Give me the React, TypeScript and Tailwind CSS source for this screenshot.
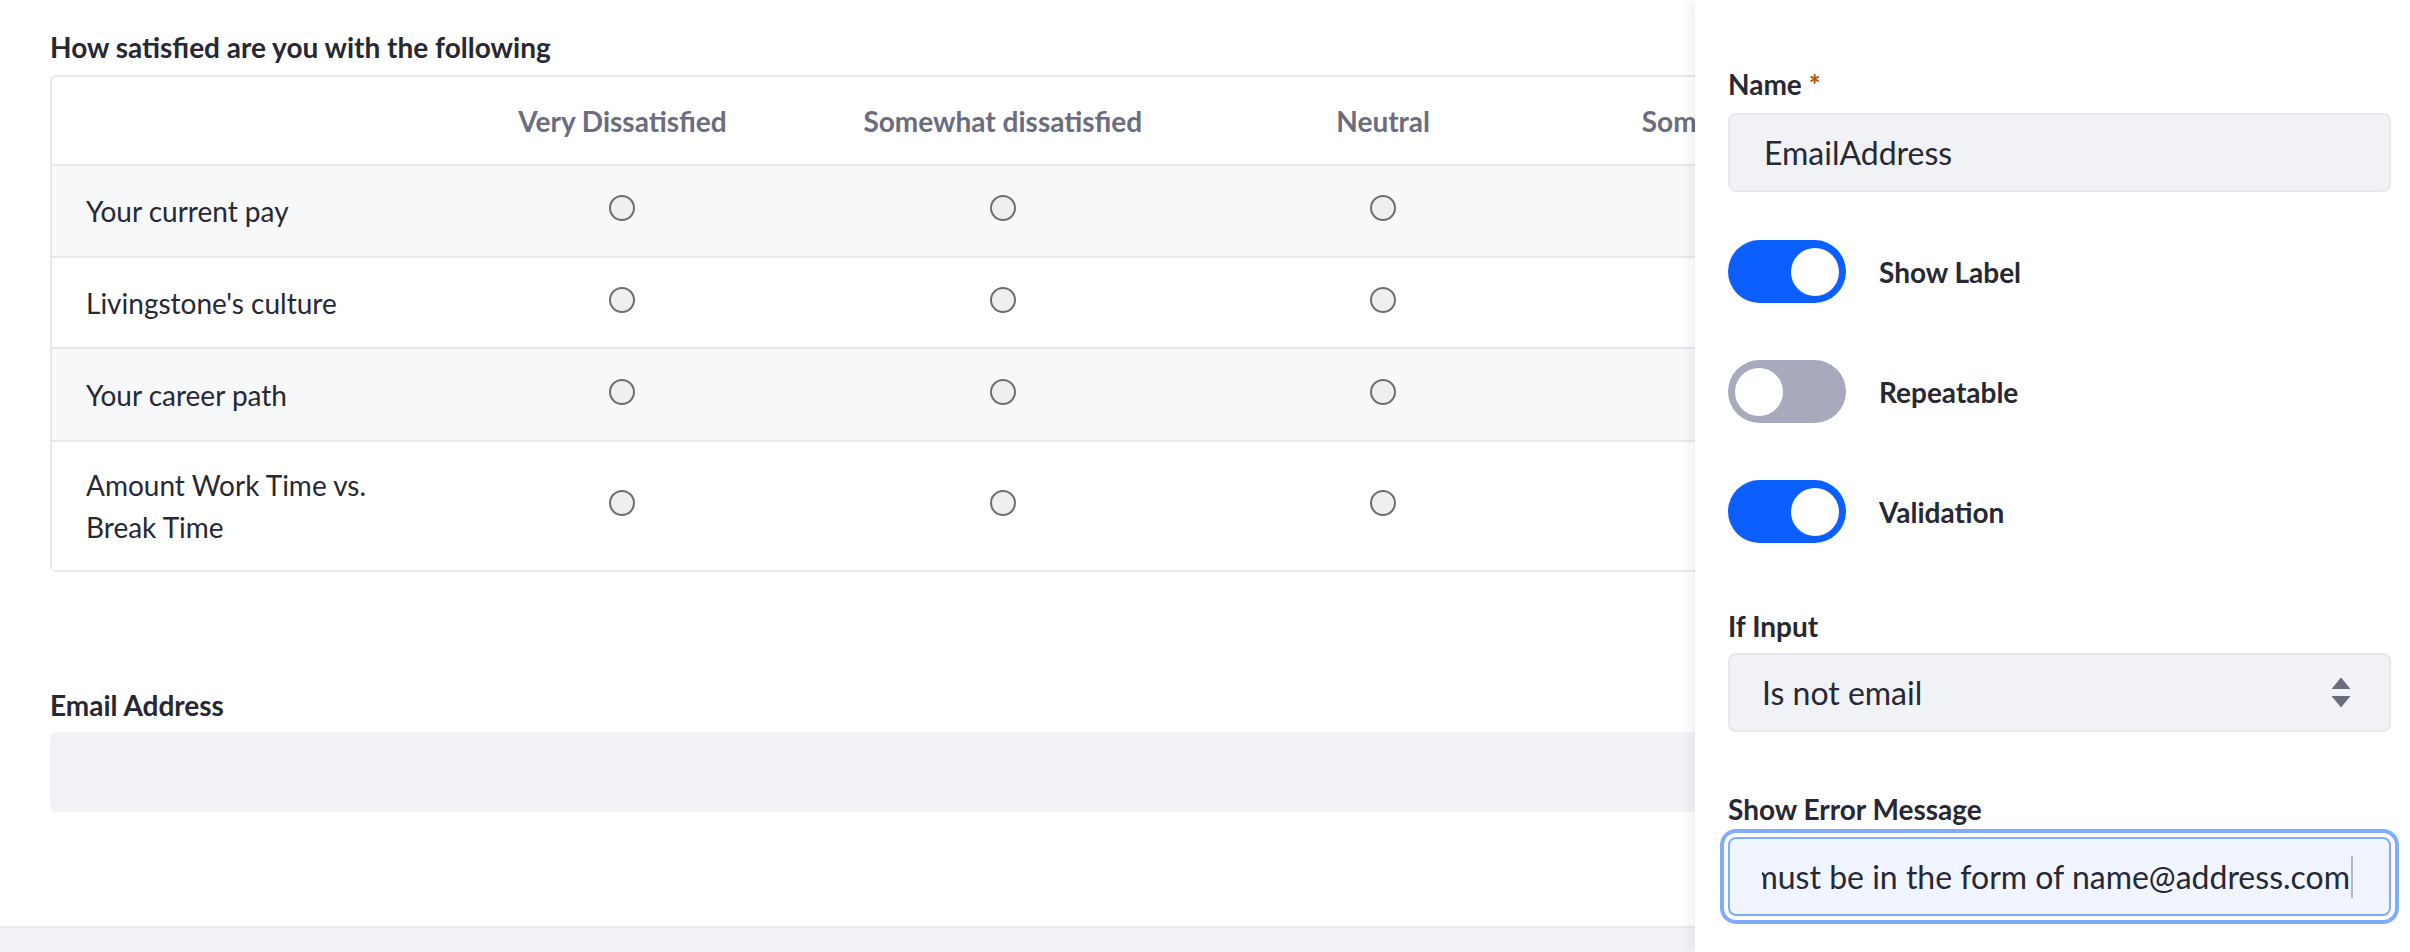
import { ReactNode } from "react";

const columns = [
  "Very Dissatisfied",
  "Somewhat dissatisfied",
  "Neutral",
  "Somewhat satisfied",
  "Very Satisfied",
];

const rows = [
  { label: "Your current pay", h: "h-[92px]" },
  { label: "Livingstone's culture", h: "h-[91px]" },
  { label: "Your career path", h: "h-[93px]" },
  { label: "Amount Work Time vs. Break Time", h: "h-[128px]" },
];

function Radio() {
  return (
    <span className="block h-[26px] w-[26px] rounded-full border-2 border-[#6e6e6e] bg-[#efefef]" />
  );
}

function Toggle({ on, label }: { on: boolean; label: string }) {
  return (
    <div className="flex items-center gap-[33px]">
      <div
        className={
          on
            ? "flex h-[63px] w-[118px] items-center justify-end rounded-full bg-[#0b5fff] px-[7px]"
            : "flex h-[63px] w-[118px] items-center justify-start rounded-full bg-[#a7a9bc] px-[7px]"
        }
      >
        <span className="block h-[48px] w-[48px] rounded-full bg-white" />
      </div>
      <span className="text-[28px] font-bold text-[#272833]">{label}</span>
    </div>
  );
}

function FieldLabel({ children }: { children: ReactNode }) {
  return (
    <div className="text-[28px] leading-[40px] font-bold text-[#272833]">{children}</div>
  );
}

export default function App() {
  return (
    <div className="flex h-[952px] w-[2410px] overflow-hidden bg-white font-['Lato','Liberation_Sans',sans-serif]">
      {/* form canvas */}
      <div className="flex w-[1695px] shrink-0 flex-col overflow-hidden">
        <div className="pl-[50px] pt-[27px]">
          <FieldLabel>How satisfied are you with the following</FieldLabel>

          <div className="mt-[8px] w-[2286px] rounded-[6px] border-2 border-[#e7e7ed]">
            <div className="grid h-[89px] grid-cols-6 items-center border-b-2 border-[#e7e7ed]">
              <div />
              {columns.map((c) => (
                <div
                  key={c}
                  className="text-center text-[28px] font-bold whitespace-nowrap text-[#6b6c7e]"
                >
                  {c}
                </div>
              ))}
            </div>
            {rows.map((r, i) => (
              <div
                key={r.label}
                className={`grid grid-cols-6 items-center ${r.h} ${
                  i < rows.length - 1 ? "border-b-2 border-[#e7e7ed]" : ""
                } ${i % 2 === 0 ? "bg-[#f7f8f9]" : "bg-white"}`}
              >
                <div className="pl-[34px] pr-[38px] text-[28px] leading-[42px] text-[#272833]">
                  {r.label}
                </div>
                {columns.map((c) => (
                  <div key={c} className="flex justify-center pb-[6px]">
                    <Radio />
                  </div>
                ))}
              </div>
            ))}
          </div>

          <div className="mt-[113px]">
            <FieldLabel>Email Address</FieldLabel>
          </div>
          <div className="mt-[7px] h-[80px] w-[2286px] rounded-[8px] bg-[#f1f2f5]" />
        </div>

        <div className="mt-auto h-[26px] border-t-2 border-[#e7e7ed] bg-[#f1f2f5]" />
      </div>

      {/* settings sidebar */}
      <div className="flex w-[715px] min-w-0 shrink-0 flex-col overflow-hidden bg-white pl-[33px] pr-[19px] pt-[64px] shadow-[-6px_0_10px_rgba(0,0,0,0.05)]">
        <FieldLabel>
          Name <span className="text-[#b95000]">*</span>
        </FieldLabel>
        <div className="mt-[9px] flex h-[79px] items-center rounded-[8px] border-2 border-[#e7e7ed] bg-[#f1f2f5] pl-[34px] text-[32px] text-[#272833]">
          EmailAddress
        </div>

        <div className="mt-[48px] flex flex-col gap-[57px]">
          <Toggle on label="Show Label" />
          <Toggle on={false} label="Repeatable" />
          <Toggle on label="Validation" />
        </div>

        <div className="mt-[63px]">
          <FieldLabel>If Input</FieldLabel>
        </div>
        <div className="mt-[7px] flex h-[79px] items-center justify-between rounded-[8px] border-2 border-[#e7e7ed] bg-[#f1f2f5] pl-[32px] pr-[38px] text-[32px] text-[#272833]">
          <span>Is not email</span>
          <svg width="20" height="31" viewBox="0 0 20 31" fill="#6b6c7e">
            <path d="M10 0.5 L19.5 12 L0.5 12 Z" />
            <path d="M0.5 19 L19.5 19 L10 30.5 Z" />
          </svg>
        </div>

        <div className="mt-[57px]">
          <FieldLabel>Show Error Message</FieldLabel>
        </div>
        <div className="mt-[8px] flex h-[79px] min-w-0 items-center rounded-[8px] border-2 border-[#80acff] bg-[#f0f5ff] pl-[32px] pr-[36px] text-[32px] text-[#272833] shadow-[0_0_0_4px_#ffffff,0_0_0_8px_#80acff]">
          <div className="flex w-0 min-w-0 flex-1 justify-end overflow-hidden whitespace-nowrap">
            <span className="shrink-0">Email must be in the form of name@address.com</span>
          </div>
          <span className="ml-[1px] block h-[42px] w-[2px] shrink-0 bg-[#b8b8b8]" />
        </div>
      </div>
    </div>
  );
}
